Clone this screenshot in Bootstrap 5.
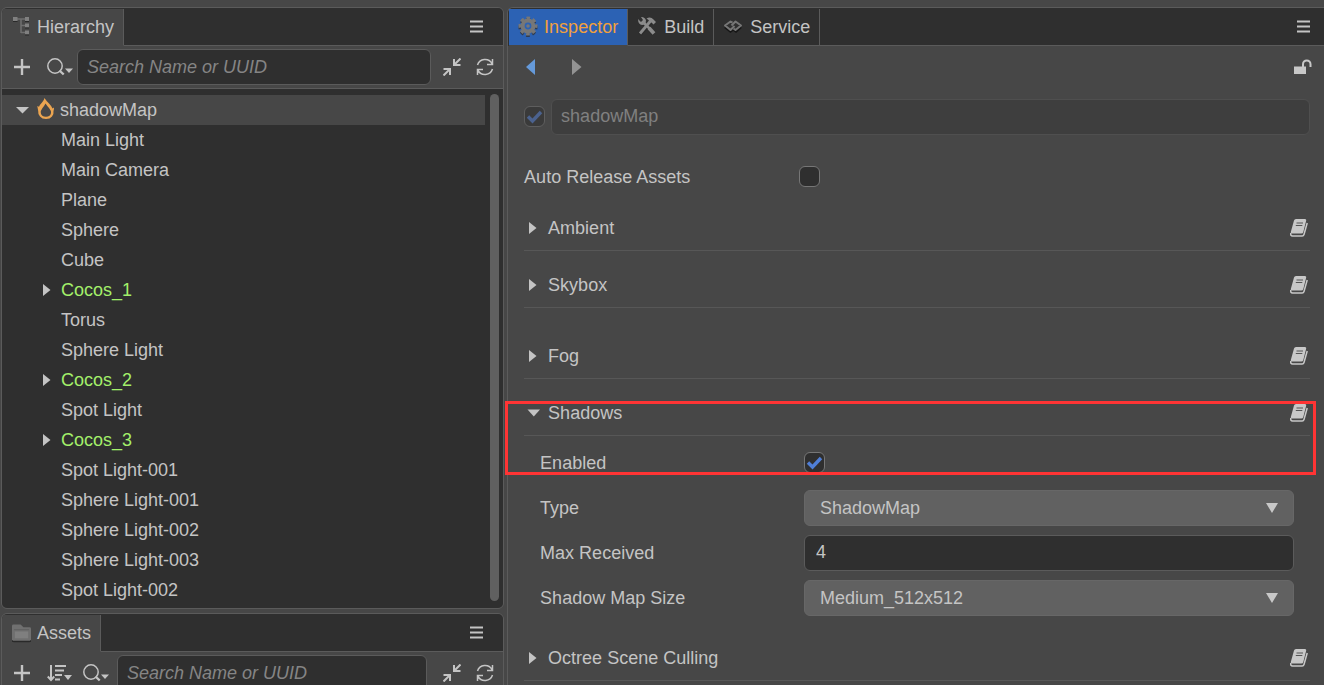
<!DOCTYPE html>
<html lang="en">
<head>
<meta charset="utf-8">
<meta name="viewport" content="width=device-width, initial-scale=1">
<title>Scene Editor</title>
<link href="https://cdn.jsdelivr.net/npm/bootstrap@5.3.0/dist/css/bootstrap.min.css" rel="stylesheet">
<style>
  :root { --panel: #474747; --dark: #2f2f2f; --line: #5b5b5b; --ink: #c4c4c4; }
  body { background: var(--panel); color: var(--ink); font: 18px/24px "Liberation Sans", Arial, sans-serif; }
  button { color: inherit; font: inherit; background: none; border: 0; padding: 0; display: flex; align-items: center; }
  svg { display: block; flex: none; }
  .side { flex: 0 0 calc(38% + 1px); gap: 4px; padding-left: 1px; }
  .editor { padding-top: 7px; gap: 3px; }
  .dock { border: 1px solid var(--line); border-radius: 6px; }
  .side .dock { overflow: hidden; }
  .inspector { border-width: 1px 0 0 1px; border-radius: 6px 0 0 0; }
  .tabs { height: 38px; background: var(--dark); padding-top: 1px; border-radius: 5px 0 0 0; }
  .inspector .tabs { padding-left: 1px; }
  .tabs .filler { border-bottom: 1px solid var(--line); padding: 0 20px 2px 0; }
  .inspector .filler { padding-right: 14px; }
  .tab { border-right: 1px solid var(--line); border-bottom: 1px solid var(--line); padding: 0 9px; gap: 7px; }
  .side .tab { background: var(--panel); border-bottom-color: var(--panel); padding-left: 10px; gap: 6px; }
  .inspector .tab.active { background: #2c62b4; color: #f2a03c; border-bottom-color: var(--panel); gap: 6px; }
  .tools { height: 43px; border-bottom: 1px solid var(--line); padding: 0 9px 0 11px; }
  .shrink-btn { margin: 0 15px 0 4px; }
  .field { background: var(--dark); color: var(--ink); border: 1px solid var(--line); border-radius: 6px; height: 36px; padding: 0 9px; min-width: 0; width: 100%; font: inherit; outline: 0; }
  .field::placeholder { color: #858585; font-style: italic; opacity: 1; }
  .field:disabled { background: #3e3e3e; border-color: #4f4f4f; color: #808080; }
  .tree { background: var(--dark); padding: 5px 4px 3px 0; gap: 5px; }
  .tree ul { margin-top: 1px; }
  .node { height: 30px; padding-left: 59px; }
  .node.root { background: var(--panel); padding-left: 14px; }
  .node.parent { color: #a3f06a; padding-left: 41px; }
  .node.parent button { width: 18px; color: var(--ink); }
  .thumb { width: 9px; border-radius: 5px; background: #606060; }
  .props { padding: 0 14px 0 16px; }
  .history { height: 42px; padding-left: 2px; padding-right: 12px; gap: 30px; margin-right: -14px; }
  .line45 { height: 45px; }
  .name-row { margin: 6px 0 15px; gap: 6px; }
  .key { flex: 0 0 35%; }
  .sect { border-bottom: 1px solid #575757; padding-right: 2px; }
  .sect > button:first-child svg { width: 24px; }
  .gap-above { margin-top: 12px; }
  .gap-above-lg { margin-top: 26px; }
  .gap-above-sm { margin-top: 7px; }
  .inner { padding: 0 16px; }
  .inner .field { padding-left: 11px; }
  .tick { appearance: none; flex: none; width: 21px; height: 21px; margin: 0; border: 1px solid #767676; border-radius: 6px; background: var(--dark) center/19px no-repeat; }
  .tick:checked { background-image: url("data:image/svg+xml,%3Csvg xmlns='http://www.w3.org/2000/svg' viewBox='0 0 19 19'%3E%3Cpath d='M3 9.500l4.500 4.500L16 5' fill='none' stroke='%234f7ed6' stroke-width='3.400'/%3E%3C/svg%3E"); }
  .tick:disabled { opacity: .5; }
  .inner .pick { appearance: none; padding-left: 15px; border-color: #676767; background: #616161 url("data:image/svg+xml,%3Csvg xmlns='http://www.w3.org/2000/svg' viewBox='0 0 12 10'%3E%3Cpath d='M0 0h12L6 10z' fill='%23c8c8c8'/%3E%3C/svg%3E") right 15px center/12px 10px no-repeat; }
  .callout { position: absolute; inset: 10px -6px 10px -19px; border: 3px solid #ff3434; pointer-events: none; }
</style>
</head>
<body class="vh-100 overflow-hidden">
<svg width="0" height="0" class="position-absolute" aria-hidden="true">
  <symbol id="menu" viewBox="0 0 13 13"><path d="M0 1.500h13M0 6.500h13M0 11.500h13" stroke="#c4c4c4" stroke-width="2"/></symbol>
  <symbol id="plus" viewBox="0 0 18 18"><path d="M9 1v16M1 9h16" stroke="#c4c4c4" stroke-width="2.400"/></symbol>
  <symbol id="search" viewBox="0 0 26 20"><circle cx="8" cy="9" r="7.200" fill="none" stroke="#c4c4c4" stroke-width="1.500"/><path d="M12.500 13.500l4.200 4" stroke="#c4c4c4" stroke-width="2.400"/><path d="M18 11.500h8l-4 4.500z" fill="#c4c4c4"/></symbol>
  <symbol id="collapse" viewBox="0 0 18 18"><g fill="none" stroke="#c4c4c4" stroke-width="2"><path d="M17.500.5l-6 6M11 1v6h6.500M.5 17.500l6-6M.5 11H7v6"/></g></symbol>
  <symbol id="refresh" viewBox="0 0 18 18"><g fill="none" stroke="#c4c4c4" stroke-width="1.500"><path d="M1.500 7A8 8 0 0 1 16 5.500M16.500 1v5.500H11M16.500 11A8 8 0 0 1 2 12.500M1.500 17v-5.500H7"/></g></symbol>
  <symbol id="right" viewBox="0 0 24 14"><path d="M5 1l7.500 6L5 13z" fill="#c4c4c4"/></symbol>
  <symbol id="down" viewBox="0 0 24 14"><path d="M3.500 3.500h12.500l-6.200 7z" fill="#c4c4c4"/></symbol>
  <symbol id="book" viewBox="0 0 18 18"><path d="M6 0h9q1.500 0 1.200 1.500L13.300 13q-.4 1.500-2 1.500H2q-1.600 0-1.200-1.500L4 1.500Q4.400 0 6 0z" fill="#c8c8c8"/><path d="M6.500 4h6.500M5.800 6.500h6.500" stroke="#555" stroke-width="1.200"/><path d="M17.200 4l-3.200 11.500q-.4 1.500-1.800 1.500H2.500Q.4 17 .7 14" fill="none" stroke="#c8c8c8" stroke-width="1.500"/></symbol>
</svg>

<div class="editor d-flex h-100">
  <aside class="side d-flex flex-column">
    <section class="dock flex-shrink-0" aria-label="Hierarchy">
      <header class="tabs d-flex">
        <button class="tab" type="button">
          <svg width="19" height="22" viewBox="0 0 19 22"><path d="M3 3h12M9 3v14M9 9.500h7M9 16.500h7" fill="none" stroke="#707070" stroke-width="1.500"/><path d="M1 1h4.500v4H1zM13 1h4v4h-4zM13 7.500h4v4h-4zM13 14.500h4v4h-4z" fill="#808080"/><path d="M1 5.500h4.500M13 5.500h4M13 12h4M13 19h4" stroke="#292929"/></svg>
          Hierarchy</button>
        <div class="filler flex-fill d-flex justify-content-end"><button type="button" aria-label="Hierarchy menu"><svg width="13" height="13"><use href="#menu"/></svg></button></div>
      </header>
      <div class="tools d-flex align-items-center">
        <button type="button" aria-label="Add" class="me-3"><svg width="18" height="18"><use href="#plus"/></svg></button>
        <button type="button" aria-label="Search type"><svg width="26" height="20"><use href="#search"/></svg></button>
        <input class="field ms-1 me-2" type="search" placeholder="Search Name or UUID" aria-label="Search hierarchy">
        <button type="button" aria-label="Collapse" class="shrink-btn"><svg width="18" height="18"><use href="#collapse"/></svg></button>
        <button type="button" aria-label="Refresh"><svg width="18" height="18"><use href="#refresh"/></svg></button>
      </div>
      <div class="tree d-flex">
        <ul class="list-unstyled flex-fill mb-0">
          <li class="node root d-flex align-items-center"><button type="button" aria-label="Collapse shadowMap"><svg width="21" height="14" viewBox="0 0 21 14"><path d="M0 4h13L6.500 10.500z" fill="#c4c4c4"/></svg></button>
            <svg width="19" height="24" viewBox="0 0 19 24" class="me-1"><path fill="#eba551" fill-rule="evenodd" d="M7.500 0Q9 2.500 12 5.500q2.500 2.500 3.500 5l1.500-1q0 2-.5 3.500.5 3-1.500 5.500-2 2.500-6 2.500t-6-2.500Q.8 16 1.200 13L.3 8l1.700.8Q3 6.500 5 4.500 7 2.500 7.500 0zM8.500 5.500Q7.500 7.500 5.500 10t-1.700 5q.5 3.500 5.200 3.700 4.500-.2 5-3.700.2-2.500-2-5T8.500 5.500z"/></svg>shadowMap</li>
          <li class="node d-flex align-items-center">Main Light</li>
          <li class="node d-flex align-items-center">Main Camera</li>
          <li class="node d-flex align-items-center">Plane</li>
          <li class="node d-flex align-items-center">Sphere</li>
          <li class="node d-flex align-items-center">Cube</li>
          <li class="node parent d-flex align-items-center"><button type="button" aria-label="Expand Cocos_1"><svg width="18" height="14" viewBox="5 0 18 14"><use href="#right" width="24" height="14"/></svg></button>Cocos_1</li>
          <li class="node d-flex align-items-center">Torus</li>
          <li class="node d-flex align-items-center">Sphere Light</li>
          <li class="node parent d-flex align-items-center"><button type="button" aria-label="Expand Cocos_2"><svg width="18" height="14" viewBox="5 0 18 14"><use href="#right" width="24" height="14"/></svg></button>Cocos_2</li>
          <li class="node d-flex align-items-center">Spot Light</li>
          <li class="node parent d-flex align-items-center"><button type="button" aria-label="Expand Cocos_3"><svg width="18" height="14" viewBox="5 0 18 14"><use href="#right" width="24" height="14"/></svg></button>Cocos_3</li>
          <li class="node d-flex align-items-center">Spot Light-001</li>
          <li class="node d-flex align-items-center">Sphere Light-001</li>
          <li class="node d-flex align-items-center">Sphere Light-002</li>
          <li class="node d-flex align-items-center">Sphere Light-003</li>
          <li class="node d-flex align-items-center">Spot Light-002</li>
        </ul>
        <div class="thumb mb-1"></div>
      </div>
    </section>

    <section class="dock flex-shrink-0" aria-label="Assets">
      <header class="tabs d-flex">
        <button class="tab" type="button">
          <svg width="19" height="20" viewBox="0 0 20 20"><path d="M0 2.500q0-1.500 1.500-1.500H9l3 3h6.500q1.500 0 1.500 1.500V17q0 2-2 2H2q-2 0-2-2z" fill="#707070"/><path d="M0 17.500q0 1.500 2 1.500h16q2 0 2-1.500" fill="none" stroke="#292929" stroke-width="1.500"/><path d="M3 8.500h14v7H3z" fill="#7f7f7f"/><path d="M2 6.500h16" stroke="#606060"/></svg>
          Assets</button>
        <div class="filler flex-fill d-flex justify-content-end"><button type="button" aria-label="Assets menu"><svg width="13" height="13"><use href="#menu"/></svg></button></div>
      </header>
      <div class="tools d-flex align-items-center">
        <button type="button" aria-label="Add asset" class="me-3"><svg width="18" height="18"><use href="#plus"/></svg></button>
        <button type="button" aria-label="Sort" class="me-2"><svg width="28" height="18" viewBox="0 0 28 18"><g fill="none" stroke="#c4c4c4" stroke-width="2"><path d="M4 1v14M.8 12.500L4 16l3.200-3.500M8 2h11M8 6.500h9M8 11h7M8 15.500h5"/></g><path d="M17 11h8l-4 5z" fill="#c4c4c4"/></svg></button>
        <button type="button" aria-label="Asset search type"><svg width="26" height="20"><use href="#search"/></svg></button>
        <input class="field ms-2 me-2" type="search" placeholder="Search Name or UUID" aria-label="Search assets">
        <button type="button" aria-label="Collapse assets" class="shrink-btn ms-2"><svg width="18" height="18"><use href="#collapse"/></svg></button>
        <button type="button" aria-label="Refresh assets"><svg width="18" height="18"><use href="#refresh"/></svg></button>
      </div>
    </section>
  </aside>

  <main class="dock inspector flex-fill">
    <header class="tabs d-flex">
      <button class="tab active" type="button">
        <svg width="20" height="22" viewBox="0 0 20 22"><g fill="none" stroke="#303c50"><circle cx="10" cy="11.500" r="8" stroke-width="3" stroke-dasharray="3.600 2.683" stroke-dashoffset="1.800"/></g><g fill="none" stroke="#777"><circle cx="10" cy="10" r="8" stroke-width="3" stroke-dasharray="3.600 2.683" stroke-dashoffset="1.800"/><circle cx="10" cy="10" r="5.400" stroke-width="4"/></g><circle cx="10" cy="10" r="1.800" fill="#777"/></svg>
        Inspector</button>
      <button class="tab" type="button">
        <svg width="20" height="22" viewBox="0 0 20 22"><path d="M3 18.500L14 6M6 6.500l11 11.500" stroke="#2a2a2a" stroke-width="4"/><path d="M3 17.500L13.500 5" stroke="#8b8b8b" stroke-width="2.800"/><path d="M9.500 2.500q4-2.500 7 1l2.500 2.500-2.500 2.500-2-2-1.500-.5-1.500-2z" fill="#8b8b8b"/><path d="M6.500 6.500l6 6" stroke="#8b8b8b" stroke-width="2.600"/><path d="M12 12l5 5.500" stroke="#8b8b8b" stroke-width="3.800"/><path d="M1 3l3 3 2-2-2-3q4-.2 5 3.500l-.5 3L6 9Q1 9 1 3z" fill="#8b8b8b"/></svg>
        Build</button>
      <button class="tab" type="button">
        <svg width="20" height="22" viewBox="0 0 20 22"><g fill="none" stroke="#161616" stroke-width="2.400"><path d="M2 11l5.500 4.500 4-3M18 11l-5 4.500-2-1.500"/></g><g fill="none" stroke="#767676" stroke-width="2" stroke-linejoin="round"><path d="M11.500 10L7.500 14 2 9.500 7.500 5.500l2 1.200"/><path d="M8.500 9.500l4-4L18 9.500 12.500 14l-2-1.500"/></g></svg>
        Service</button>
      <div class="filler flex-fill d-flex justify-content-end"><button type="button" aria-label="Inspector menu"><svg width="13" height="13"><use href="#menu"/></svg></button></div>
    </header>

    <div class="props">
      <nav class="history d-flex align-items-center" aria-label="Selection history">
        <button type="button" aria-label="Back"><svg width="16" height="16" viewBox="0 0 16 16"><path d="M9 0v16L0 8z" fill="#659ada"/></svg></button>
        <button type="button" aria-label="Forward"><svg width="10" height="16" viewBox="0 0 10 16"><path d="M0 0v16l9.500-8z" fill="#939393"/></svg></button>
        <button type="button" aria-label="Unlocked" class="ms-auto"><svg width="18" height="16" viewBox="0 0 18 16"><path d="M0 7.500h12V15H0z" fill="#c8c8c8"/><path d="M9 8V5.200a3.700 3.700 0 0 1 7.500 0V8" fill="none" stroke="#c8c8c8" stroke-width="2"/></svg></button>
      </nav>
      <div class="name-row line45 d-flex align-items-center">
        <input class="tick" type="checkbox" checked disabled aria-label="Active">
        <input class="field" type="text" value="shadowMap" disabled aria-label="Name">
      </div>
      <div class="line45 d-flex align-items-center">
        <label class="key" for="autoRelease">Auto Release Assets</label>
        <input class="tick" type="checkbox" id="autoRelease">
      </div>

      <div class="sect line45 d-flex align-items-center justify-content-between gap-above-sm"><button type="button"><svg height="14"><use href="#right"/></svg>Ambient</button><button type="button" aria-label="Ambient help"><svg width="18" height="18"><use href="#book"/></svg></button></div>
      <div class="sect line45 d-flex align-items-center justify-content-between gap-above"><button type="button"><svg height="14"><use href="#right"/></svg>Skybox</button><button type="button" aria-label="Skybox help"><svg width="18" height="18"><use href="#book"/></svg></button></div>
      <div class="sect line45 d-flex align-items-center justify-content-between gap-above-lg"><button type="button"><svg height="14"><use href="#right"/></svg>Fog</button><button type="button" aria-label="Fog help"><svg width="18" height="18"><use href="#book"/></svg></button></div>

      <div class="position-relative gap-above">
        <div class="sect line45 d-flex align-items-center justify-content-between mb-1"><button type="button" aria-expanded="true"><svg height="14"><use href="#down"/></svg>Shadows</button><button type="button" aria-label="Shadows help"><svg width="18" height="18"><use href="#book"/></svg></button></div>
        <div class="inner"><div class="line45 d-flex align-items-center"><label class="key" for="enabled">Enabled</label><input class="tick" type="checkbox" id="enabled" checked></div></div>
        <div class="callout"></div>
      </div>
      <div class="inner">
        <div class="line45 d-flex align-items-center"><label class="key" for="type">Type</label><select class="field pick" id="type"><option>ShadowMap</option><option>Planar</option></select></div>
        <div class="line45 d-flex align-items-center"><label class="key" for="received">Max Received</label><input class="field" type="text" id="received" value="4"></div>
        <div class="line45 d-flex align-items-center"><label class="key" for="mapSize">Shadow Map Size</label><select class="field pick" id="mapSize"><option>Medium_512x512</option><option>High_1024x1024</option></select></div>
      </div>
      <div class="sect line45 d-flex align-items-center justify-content-between mt-3"><button type="button"><svg height="14"><use href="#right"/></svg>Octree Scene Culling</button><button type="button" aria-label="Octree help"><svg width="18" height="18"><use href="#book"/></svg></button></div>
    </div>
  </main>
</div>
<script src="https://cdn.jsdelivr.net/npm/bootstrap@5.3.0/dist/js/bootstrap.bundle.min.js"></script>
</body>
</html>
